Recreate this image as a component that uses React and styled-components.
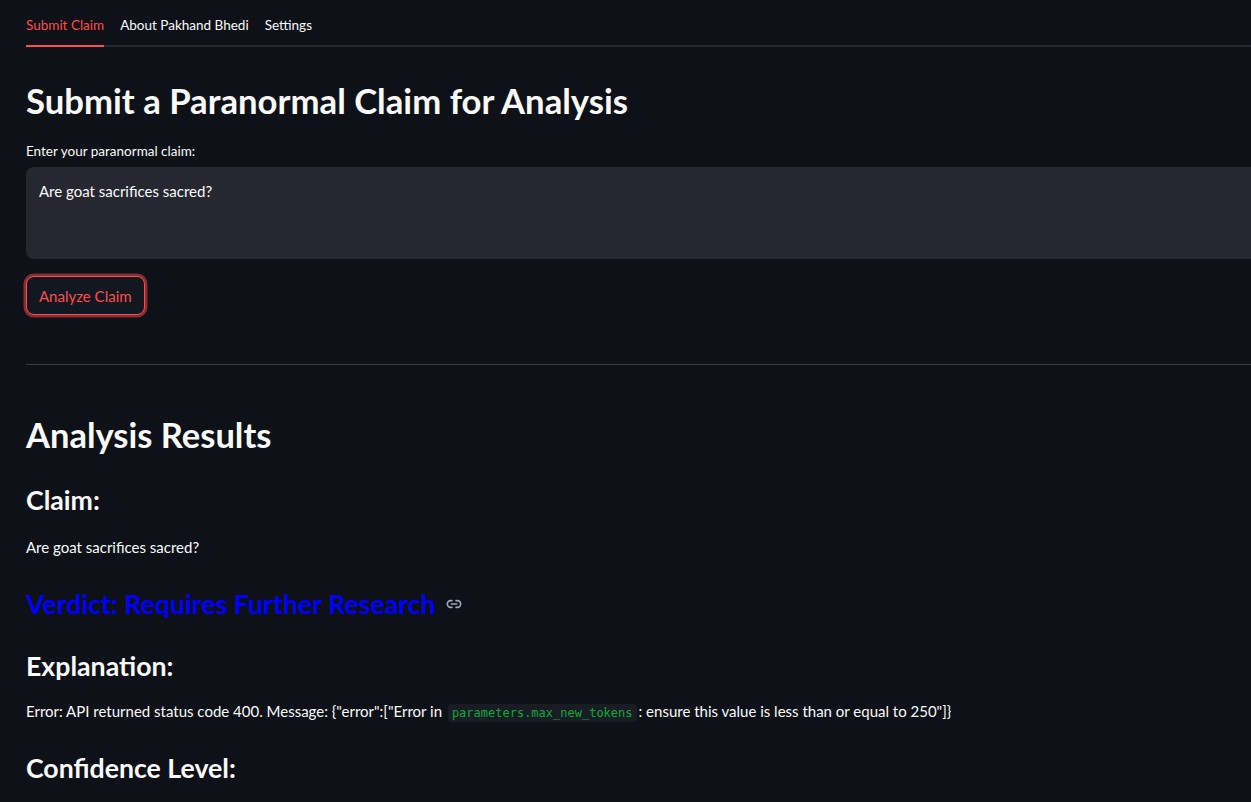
import React from "react";
import styled, { createGlobalStyle } from "styled-components";

const GlobalStyle = createGlobalStyle`
  html, body {
    margin: 0;
    padding: 0;
    background: #0e1117;
    overflow: hidden;
  }
  body {
    font-family: Lato, "Noto Sans", sans-serif;
    color: #fafafa;
  }
`;

const Page = styled.div`
  width: 1300px;
  min-height: 802px;
  padding: 0 0 0 26px;
  box-sizing: border-box;
  background: #0e1117;
`;

const TabBar = styled.div`
  display: flex;
  gap: 16px;
  height: 47px;
  border-bottom: 2px solid #262730;
  box-sizing: border-box;
  align-items: stretch;
`;

const Tab = styled.div`
  display: flex;
  align-items: center;
  padding-top: 4px;
  font-size: 13.5px;
  color: ${(p) => (p.$active ? "#ff4b4b" : "#fafafa")};
  border-bottom: 2px solid ${(p) => (p.$active ? "#ff4b4b" : "transparent")};
  margin-bottom: -2px;
`;

const Title = styled.h1`
  margin: 0;
  padding: 32px 0 0;
  font-size: 34.7px;
  font-weight: 700;
  line-height: 44px;
`;

const Label = styled.label`
  display: block;
  margin-top: 20px;
  font-size: 13.5px;
  line-height: 16px;
`;

const TextArea = styled.div`
  margin-top: 8px;
  height: 92px;
  background: #262730;
  border-radius: 8px 0 0 8px;
  padding: 15px 13px;
  box-sizing: border-box;
  font-size: 15px;
  line-height: 18px;
`;

const Button = styled.button`
  display: block;
  margin: 17px 0 0 0;
  height: 39px;
  padding: 0 12px;
  background: #131720;
  border: 1px solid #ff4b4b;
  border-radius: 8px;
  color: #ff4b4b;
  font-family: inherit;
  font-size: 15px;
  box-shadow: 0 0 0 2.5px rgba(255, 75, 75, 0.5);
`;

const Divider = styled.hr`
  margin: 49px 0 0;
  border: none;
  border-top: 1px solid #3a3c44;
`;

const H2 = styled.h2`
  margin: 0;
  padding-top: 50px;
  font-size: 34.5px;
  font-weight: 700;
  line-height: 40px;
`;

const H3 = styled.h3`
  margin: 0;
  padding-top: ${(p) => p.$top || 30}px;
  font-size: 26.7px;
  font-weight: 700;
  line-height: 32px;
  color: ${(p) => p.$color || "#fafafa"};
  display: flex;
  align-items: center;
  gap: 10px;
`;

const Para = styled.p`
  margin: 0;
  padding-top: ${(p) => p.$top || 20}px;
  font-size: 15px;
  line-height: 20px;
`;

const Code = styled.code`
  font-family: "DejaVu Sans Mono", "Liberation Mono", monospace;
  font-size: 12px;
  color: #09ab3b;
  background: #1a1c24;
  border-radius: 4px;
  padding: 2px 4px;
  margin: 0 2px;
`;

const LinkIcon = () => (
  <svg width="16" height="16" viewBox="0 0 24 24" fill="none" stroke="#a3a8b8" strokeWidth="2.4" strokeLinecap="round">
    <path d="M9 17H7a5 5 0 0 1 0-10h2" />
    <path d="M15 7h2a5 5 0 0 1 0 10h-2" />
    <path d="M8 12h8" />
  </svg>
);

export default function App() {
  return (
    <Page>
      <GlobalStyle />
      <TabBar>
        <Tab $active>Submit Claim</Tab>
        <Tab>About Pakhand Bhedi</Tab>
        <Tab>Settings</Tab>
      </TabBar>
      <Title>Submit a Paranormal Claim for Analysis</Title>
      <Label>Enter your paranormal claim:</Label>
      <TextArea>Are goat sacrifices sacred?</TextArea>
      <Button>Analyze Claim</Button>
      <Divider />
      <H2>Analysis Results</H2>
      <H3 $top={29}>Claim:</H3>
      <Para $top={21}>Are goat sacrifices sacred?</Para>
      <H3 $top={31} $color="#0000ff">
        Verdict: Requires Further Research <LinkIcon />
      </H3>
      <H3 $top={30}>Explanation:</H3>
      <Para $top={19}>
        Error: API returned status code 400. Message: {'{"error":["Error in '}
        <Code>parameters.max_new_tokens</Code>
        {': ensure this value is less than or equal to 250"]}'}
      </Para>
      <H3 $top={29}>Confidence Level:</H3>
    </Page>
  );
}
